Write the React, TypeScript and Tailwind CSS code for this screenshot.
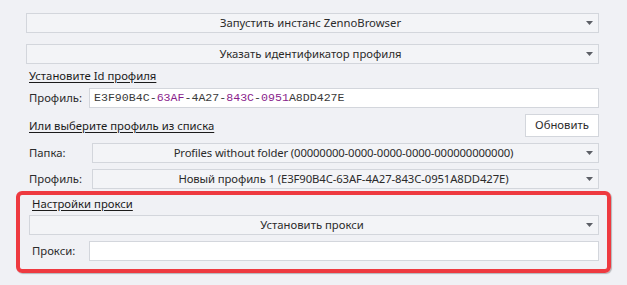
import React from 'react';

function Caret() {
  return (
    <svg width="7" height="4" viewBox="0 0 7 4" className="shrink-0">
      <path d="M0 0 H7 L3.5 4 Z" fill="#5c5f66" />
    </svg>
  );
}

function Select({ value, className = '' }: { value: string; className?: string }) {
  return (
    <div
      className={`flex h-[20px] items-center border border-[#d3d6dc] bg-[#f3f4f7] pl-2 pr-[5px] ${className}`}
    >
      <span className="flex-1 text-center text-[#2b2b2b] leading-none">{value}</span>
      <Caret />
    </div>
  );
}

function Field({ children }: { children?: React.ReactNode }) {
  return (
    <div className="flex h-[20px] flex-1 items-center border border-[#d3d6dc] bg-white px-[3px]">
      {children}
    </div>
  );
}

function Heading({ text }: { text: string }) {
  return <div className="ml-[3px] text-[#1b1b1b] underline underline-offset-2 leading-[15px]">{text}</div>;
}

const dark = 'text-[#3a3a3a]';
const purple = 'text-[#8a1d8c]';

export default function App() {
  return (
    <div
      className="h-[285px] w-[627px] bg-[#f0f1f5] pl-[26px] pr-[28px] pt-[13px] text-[11.3px]"
      style={{ fontFamily: '"Noto Sans", "Liberation Sans", sans-serif' }}
    >
      <Select value="Запустить инстанс ZennoBrowser" />
      <Select value="Указать идентификатор профиля" className="mt-[11px]" />

      <div className="mt-[4px]">
        <Heading text="Установите Id профиля" />
      </div>

      <div className="mt-[5px] flex items-center">
        <span className="ml-[3px] w-[60px] text-[#2b2b2b]">Профиль:</span>
        <Field>
          <span
            className="text-[11.6px] leading-none pl-[1px]"
            style={{ fontFamily: '"Liberation Mono", monospace' }}
          >
            <span className={dark}>E3F90B4C-</span>
            <span className={purple}>63AF</span>
            <span className={dark}>-4A27-</span>
            <span className={purple}>843C</span>
            <span className={dark}>-</span>
            <span className={purple}>0951</span>
            <span className={dark}>A8DD427E</span>
          </span>
        </Field>
      </div>

      <div className="mt-[6px] flex items-center">
        <div className="flex-1">
          <Heading text="Или выберите профиль из списка" />
        </div>
        <button className="flex h-[23px] w-[74px] items-center justify-center border border-[#d3d6dc] bg-white text-[#2b2b2b]">
          Обновить
        </button>
      </div>

      <div className="mt-[6px] flex items-center">
        <span className="ml-[3px] w-[63px] text-[#2b2b2b]">Папка:</span>
        <Select
          value="Profiles without folder (00000000-0000-0000-0000-000000000000)"
          className="flex-1 tracking-[-0.15px]"
        />
      </div>

      <div className="mt-[6px] flex items-center">
        <span className="ml-[3px] w-[63px] text-[#2b2b2b]">Профиль:</span>
        <Select
          value="Новый профиль 1 (E3F90B4C-63AF-4A27-843C-0951A8DD427E)"
          className="flex-1 tracking-[-0.1px]"
        />
      </div>

      <div className="-ml-[10px] -mr-[12px] mt-[2px] rounded-[6px] border-4 border-[#ee3a40] pb-[8px] pl-[9px] pr-[8px] pt-[1px] shadow-[1px_1px_1px_rgba(0,0,0,0.25)]">
        <Heading text="Настройки прокси" />
        <Select value="Установить прокси" className="mt-[4px]" />
        <div className="mt-[6px] flex items-center">
          <span className="ml-[3px] w-[57px] text-[#2b2b2b]">Прокси:</span>
          <Field />
        </div>
      </div>
    </div>
  );
}
